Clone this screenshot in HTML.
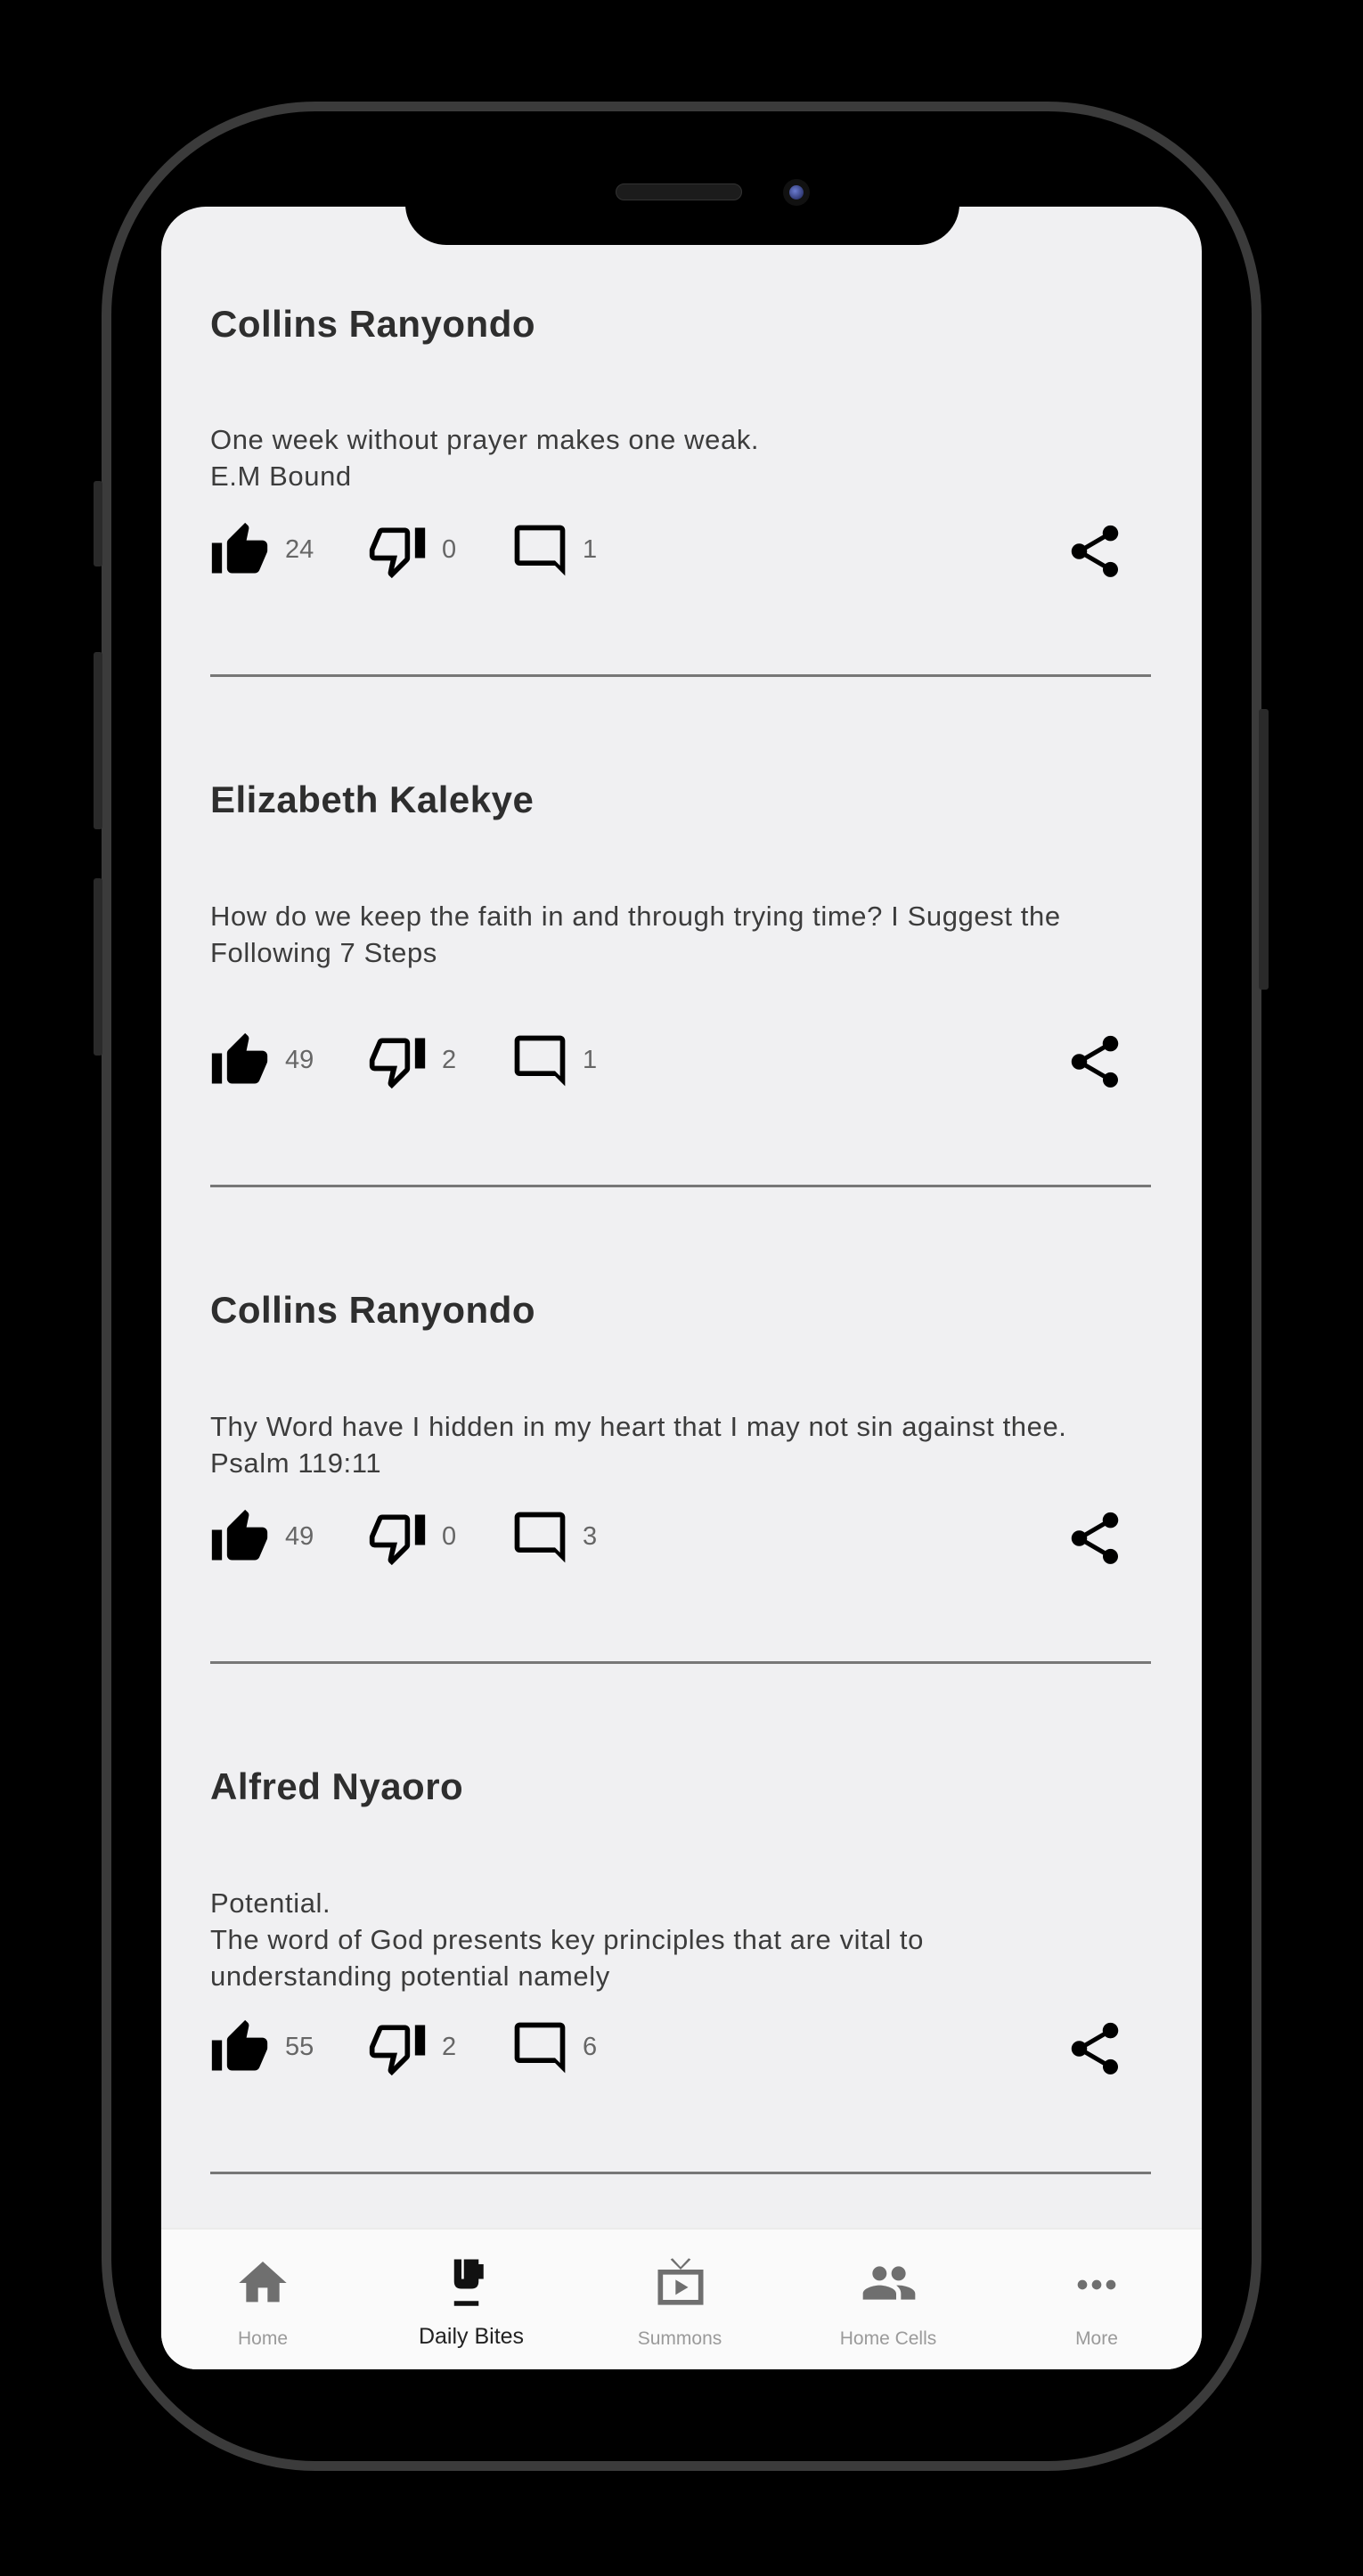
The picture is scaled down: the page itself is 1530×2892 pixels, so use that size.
<!DOCTYPE html>
<html><head><meta charset="utf-8"><style>
*{margin:0;padding:0;box-sizing:border-box}
body{width:1530px;height:2892px;background:#000;position:relative;overflow:hidden;font-family:"Liberation Sans",sans-serif}
.abs{position:absolute}
.frame{left:114px;top:114px;width:1302px;height:2660px;border:11px solid #3b3b3b;border-radius:240px;background:#000}
.btn{background:#2a2a2a;border-radius:3px}
.screen{left:181px;top:232px;width:1168px;height:2428px;background:#f0f0f2;border-radius:50px 50px 40px 40px;overflow:hidden}
.name{position:absolute;left:55px;font-size:42px;font-weight:bold;color:#2e2e2e;letter-spacing:0.5px}
.body{position:absolute;left:55px;font-size:31px;line-height:41px;color:#3c3c3c;letter-spacing:0.6px}
.ic{position:absolute}
.cnt{position:absolute;font-size:29px;color:#666}
.div{position:absolute;left:55px;width:1056px;height:3px;background:#777}
.nav{position:absolute;left:0;top:2269px;width:1168px;height:170px;background:#fafafa;border-top:2px solid #ebebeb}
.lab{position:absolute;font-size:21px;color:#9a9a9a;width:220px;text-align:center;top:111px}
</style></head><body>
<div class="abs frame"></div>
<div class="abs btn" style="left:105px;top:540px;width:10px;height:96px"></div>
<div class="abs btn" style="left:105px;top:732px;width:10px;height:199px"></div>
<div class="abs btn" style="left:105px;top:986px;width:10px;height:199px"></div>
<div class="abs btn" style="left:1413px;top:796px;width:11px;height:315px"></div>
<div class="abs screen">
<div class="name" style="top:108px">Collins Ranyondo</div>
<div class="body" style="top:241px">One week without prayer makes one weak.<br>E.M Bound</div>
<div class="div" style="top:525px"></div>

<div class="name" style="top:642px">Elizabeth Kalekye</div>
<div class="body" style="top:776px">How do we keep the faith in and through trying time? I Suggest the<br>Following 7 Steps</div>
<div class="div" style="top:1098px"></div>

<div class="name" style="top:1215px">Collins Ranyondo</div>
<div class="body" style="top:1349px">Thy Word have I hidden in my heart that I may not sin against thee.<br>Psalm 119:11</div>
<div class="div" style="top:1633px"></div>

<div class="name" style="top:1750px">Alfred Nyaoro</div>
<div class="body" style="top:1884px">Potential.<br>The word of God presents key principles that are vital to<br>understanding potential namely</div>
<div class="div" style="top:2206px"></div>

<div class="nav">
  <svg class="ic" style="left:82px;top:28px" width="64" height="64" viewBox="0 0 24 24"><path fill="#6f6f6f" d="M10 20v-6h4v6h5v-8h3L12 3 2 12h3v8z"/></svg>
  <div class="lab" style="left:4px">Home</div>
  <svg class="ic" style="left:315px;top:28px" width="66" height="66" viewBox="0 0 24 24"><path fill="#111" d="M5 2h3v8h1V2h6v2h2v6h-2v1c0 2-1 3-3 3H8c-2 0-3-1-3-3z"/><rect x="5" y="19" width="10" height="2" fill="#111"/></svg>
  <div class="lab" style="left:238px;top:106px;font-size:25px;color:#222">Daily Bites</div>
  <svg class="ic" style="left:549px;top:28px" width="68" height="68" viewBox="0 0 24 24"><path fill="#6f6f6f" d="M3 6h18v14H3zM5 8v10h14V8zM10 10l5 3-5 3zM8 2l4 4 4-4-.8-.5L12 5 8.8 1.5z"/></svg>
  <div class="lab" style="left:472px">Summons</div>
  <svg class="ic" style="left:782px;top:28px" width="70" height="64" viewBox="0 0 24 24"><path fill="#6f6f6f" d="M16 11c1.66 0 2.99-1.34 2.99-3S17.66 5 16 5c-1.66 0-3 1.34-3 3s1.34 3 3 3zm-8 0c1.66 0 2.99-1.34 2.99-3S9.660 5 8 5C6.34 5 5 6.34 5 8s1.34 3 3 3zm0 2c-2.33 0-7 1.17-7 3.5V19h14v-2.5c0-2.33-4.67-3.5-7-3.5zm8 0c-.29 0-.62.02-.97.05 1.16.84 1.97 1.97 1.970 3.45V19h6v-2.5c0-2.33-4.67-3.5-7-3.5z"/></svg>
  <div class="lab" style="left:706px">Home Cells</div>
  <svg class="ic" style="left:1018px;top:30px" width="64" height="64" viewBox="0 0 24 24"><circle cx="6" cy="12" r="2" fill="#6f6f6f"/><circle cx="12" cy="12" r="2" fill="#6f6f6f"/><circle cx="18" cy="12" r="2" fill="#6f6f6f"/></svg>
  <div class="lab" style="left:940px">More</div>
</div>
</div>

<div class="abs" style="left:455px;top:228px;width:622px;height:47px;background:#000;border-radius:0 0 46px 46px"></div>
<div class="abs" style="left:691px;top:206px;width:142px;height:19px;background:#1c1c1c;border-radius:10px;border:1px solid #333"></div>
<div class="abs" style="left:879px;top:201px;width:30px;height:30px;background:#111;border-radius:50%"><div style="margin:7px;width:16px;height:16px;border-radius:50%;background:radial-gradient(circle at 40% 40%,#6a7bd0,#1a2050)"></div></div>

<div class="abs" style="left:0;top:584px">
<svg class="ic" style="left:233px;top:0" width="72" height="68" viewBox="0 0 24 24"><path fill="#000" d="M1 21h4V9H1v12zm22-11c0-1.1-.9-2-2-2h-6.31l.95-4.57.03-.32c0-.41-.17-.79-.44-1.06L14.17 1 7.59 7.59C7.22 7.95 7 8.45 7 9v10c0 1.1.9 2 2 2h9c.83 0 1.54-.5 1.84-1.22l3.02-7.05c.09-.23.14-.47.14-.73v-2z"/></svg>
<div class="cnt" style="left:320px;top:17px">24</div>
<svg class="ic" style="left:410px;top:0" width="72" height="68" viewBox="0 0 24 24"><path fill="#000" d="M15 3H6c-.83 0-1.54.5-1.84 1.22l-3.02 7.05c-.09.23-.14.47-.14.73v2c0 1.1.9 2 2 2h6.31l-.95 4.57-.03.32c0 .41.17.79.44 1.06L9.83 23l6.59-6.59c.36-.36.58-.86.58-1.41V5c0-1.1-.9-2-2-2zm0 12l-4.34 4.34L12 14H3v-2l3-7h9v10zm4-12h4v12h-4z"/></svg>
<div class="cnt" style="left:496px;top:17px">0</div>
<svg class="ic" style="left:570px;top:0" width="72" height="68" viewBox="0 0 24 24"><g transform="translate(24 0) scale(-1 1)"><path fill="#000" d="M20 2H4c-1.1 0-2 .9-2 2v18l4-4h14c1.1 0 2-.9 2-2V4c0-1.1-.9-2-2-2zm0 14H6l-2 2V4h16v12z"/></g></svg>
<div class="cnt" style="left:654px;top:17px">1</div>
<svg class="ic" style="left:1194px;top:0" width="70" height="70" viewBox="0 0 24 24"><path fill="#000" d="M18 16.08c-.76 0-1.44.3-1.96.77L8.91 12.7c.05-.23.09-.46.09-.7s-.04-.47-.09-.7l7.05-4.11c.54.5 1.25.81 2.04.81 1.66 0 3-1.34 3-3s-1.34-3-3-3-3 1.34-3 3c0 .24.04.47.09.7L8.04 9.81C7.5 9.31 6.79 9 6 9c-1.66 0-3 1.34-3 3s1.34 3 3 3c.79 0 1.5-.31 2.04-.81l7.12 4.16c-.05.21-.08.43-.08.65 0 1.61 1.31 2.92 2.92 2.92 1.61 0 2.92-1.31 2.92-2.92s-1.31-2.92-2.92-2.92z"/></svg>
</div>

<div class="abs" style="left:0;top:1157px">
<svg class="ic" style="left:233px;top:0" width="72" height="68" viewBox="0 0 24 24"><path fill="#000" d="M1 21h4V9H1v12zm22-11c0-1.1-.9-2-2-2h-6.31l.95-4.57.03-.32c0-.41-.17-.79-.44-1.06L14.17 1 7.59 7.59C7.22 7.95 7 8.45 7 9v10c0 1.1.9 2 2 2h9c.83 0 1.54-.5 1.84-1.22l3.02-7.05c.09-.23.14-.47.14-.73v-2z"/></svg>
<div class="cnt" style="left:320px;top:17px">49</div>
<svg class="ic" style="left:410px;top:0" width="72" height="68" viewBox="0 0 24 24"><path fill="#000" d="M15 3H6c-.83 0-1.54.5-1.84 1.22l-3.02 7.05c-.09.23-.14.47-.14.73v2c0 1.1.9 2 2 2h6.31l-.95 4.57-.03.32c0 .41.17.79.44 1.06L9.83 23l6.59-6.59c.36-.36.58-.86.58-1.41V5c0-1.1-.9-2-2-2zm0 12l-4.34 4.34L12 14H3v-2l3-7h9v10zm4-12h4v12h-4z"/></svg>
<div class="cnt" style="left:496px;top:17px">2</div>
<svg class="ic" style="left:570px;top:0" width="72" height="68" viewBox="0 0 24 24"><g transform="translate(24 0) scale(-1 1)"><path fill="#000" d="M20 2H4c-1.1 0-2 .9-2 2v18l4-4h14c1.1 0 2-.9 2-2V4c0-1.1-.9-2-2-2zm0 14H6l-2 2V4h16v12z"/></g></svg>
<div class="cnt" style="left:654px;top:17px">1</div>
<svg class="ic" style="left:1194px;top:0" width="70" height="70" viewBox="0 0 24 24"><path fill="#000" d="M18 16.08c-.76 0-1.44.3-1.96.77L8.91 12.7c.05-.23.09-.46.09-.7s-.04-.47-.09-.7l7.05-4.11c.54.5 1.25.81 2.04.81 1.66 0 3-1.34 3-3s-1.34-3-3-3-3 1.34-3 3c0 .24.04.47.09.7L8.04 9.81C7.5 9.31 6.79 9 6 9c-1.66 0-3 1.34-3 3s1.34 3 3 3c.79 0 1.5-.31 2.04-.81l7.12 4.16c-.05.21-.08.43-.08.65 0 1.61 1.31 2.92 2.92 2.92 1.61 0 2.92-1.31 2.92-2.92s-1.31-2.92-2.92-2.92z"/></svg>
</div>

<div class="abs" style="left:0;top:1692px">
<svg class="ic" style="left:233px;top:0" width="72" height="68" viewBox="0 0 24 24"><path fill="#000" d="M1 21h4V9H1v12zm22-11c0-1.1-.9-2-2-2h-6.31l.95-4.57.03-.32c0-.41-.17-.79-.44-1.06L14.17 1 7.59 7.59C7.22 7.95 7 8.45 7 9v10c0 1.1.9 2 2 2h9c.83 0 1.54-.5 1.84-1.22l3.02-7.05c.09-.23.14-.47.14-.73v-2z"/></svg>
<div class="cnt" style="left:320px;top:17px">49</div>
<svg class="ic" style="left:410px;top:0" width="72" height="68" viewBox="0 0 24 24"><path fill="#000" d="M15 3H6c-.83 0-1.54.5-1.84 1.22l-3.02 7.05c-.09.23-.14.47-.14.73v2c0 1.1.9 2 2 2h6.31l-.95 4.57-.03.32c0 .41.17.79.44 1.06L9.83 23l6.59-6.59c.36-.36.58-.86.58-1.41V5c0-1.1-.9-2-2-2zm0 12l-4.34 4.34L12 14H3v-2l3-7h9v10zm4-12h4v12h-4z"/></svg>
<div class="cnt" style="left:496px;top:17px">0</div>
<svg class="ic" style="left:570px;top:0" width="72" height="68" viewBox="0 0 24 24"><g transform="translate(24 0) scale(-1 1)"><path fill="#000" d="M20 2H4c-1.1 0-2 .9-2 2v18l4-4h14c1.1 0 2-.9 2-2V4c0-1.1-.9-2-2-2zm0 14H6l-2 2V4h16v12z"/></g></svg>
<div class="cnt" style="left:654px;top:17px">3</div>
<svg class="ic" style="left:1194px;top:0" width="70" height="70" viewBox="0 0 24 24"><path fill="#000" d="M18 16.08c-.76 0-1.44.3-1.96.77L8.91 12.7c.05-.23.09-.46.09-.7s-.04-.47-.09-.7l7.05-4.11c.54.5 1.25.81 2.04.81 1.66 0 3-1.34 3-3s-1.34-3-3-3-3 1.34-3 3c0 .24.04.47.09.7L8.04 9.81C7.5 9.31 6.79 9 6 9c-1.66 0-3 1.34-3 3s1.34 3 3 3c.79 0 1.5-.31 2.04-.81l7.12 4.16c-.05.21-.08.43-.08.65 0 1.61 1.31 2.92 2.92 2.92 1.61 0 2.92-1.31 2.92-2.92s-1.31-2.92-2.92-2.92z"/></svg>
</div>

<div class="abs" style="left:0;top:2265px">
<svg class="ic" style="left:233px;top:0" width="72" height="68" viewBox="0 0 24 24"><path fill="#000" d="M1 21h4V9H1v12zm22-11c0-1.1-.9-2-2-2h-6.31l.95-4.57.03-.32c0-.41-.17-.79-.44-1.06L14.17 1 7.59 7.59C7.22 7.95 7 8.45 7 9v10c0 1.1.9 2 2 2h9c.83 0 1.54-.5 1.84-1.22l3.02-7.05c.09-.23.14-.47.14-.73v-2z"/></svg>
<div class="cnt" style="left:320px;top:17px">55</div>
<svg class="ic" style="left:410px;top:0" width="72" height="68" viewBox="0 0 24 24"><path fill="#000" d="M15 3H6c-.83 0-1.54.5-1.84 1.22l-3.02 7.05c-.09.23-.14.47-.14.73v2c0 1.1.9 2 2 2h6.31l-.95 4.57-.03.32c0 .41.17.79.44 1.06L9.83 23l6.59-6.59c.36-.36.58-.86.58-1.41V5c0-1.1-.9-2-2-2zm0 12l-4.34 4.34L12 14H3v-2l3-7h9v10zm4-12h4v12h-4z"/></svg>
<div class="cnt" style="left:496px;top:17px">2</div>
<svg class="ic" style="left:570px;top:0" width="72" height="68" viewBox="0 0 24 24"><g transform="translate(24 0) scale(-1 1)"><path fill="#000" d="M20 2H4c-1.1 0-2 .9-2 2v18l4-4h14c1.1 0 2-.9 2-2V4c0-1.1-.9-2-2-2zm0 14H6l-2 2V4h16v12z"/></g></svg>
<div class="cnt" style="left:654px;top:17px">6</div>
<svg class="ic" style="left:1194px;top:0" width="70" height="70" viewBox="0 0 24 24"><path fill="#000" d="M18 16.08c-.76 0-1.44.3-1.96.77L8.91 12.7c.05-.23.09-.46.09-.7s-.04-.47-.09-.7l7.05-4.11c.54.5 1.25.81 2.04.81 1.66 0 3-1.34 3-3s-1.34-3-3-3-3 1.34-3 3c0 .24.04.47.09.7L8.04 9.81C7.5 9.31 6.79 9 6 9c-1.66 0-3 1.34-3 3s1.34 3 3 3c.79 0 1.5-.31 2.04-.81l7.12 4.16c-.05.21-.08.43-.08.65 0 1.61 1.31 2.92 2.92 2.92 1.61 0 2.92-1.31 2.92-2.92s-1.31-2.92-2.92-2.92z"/></svg>
</div>
</body></html>
